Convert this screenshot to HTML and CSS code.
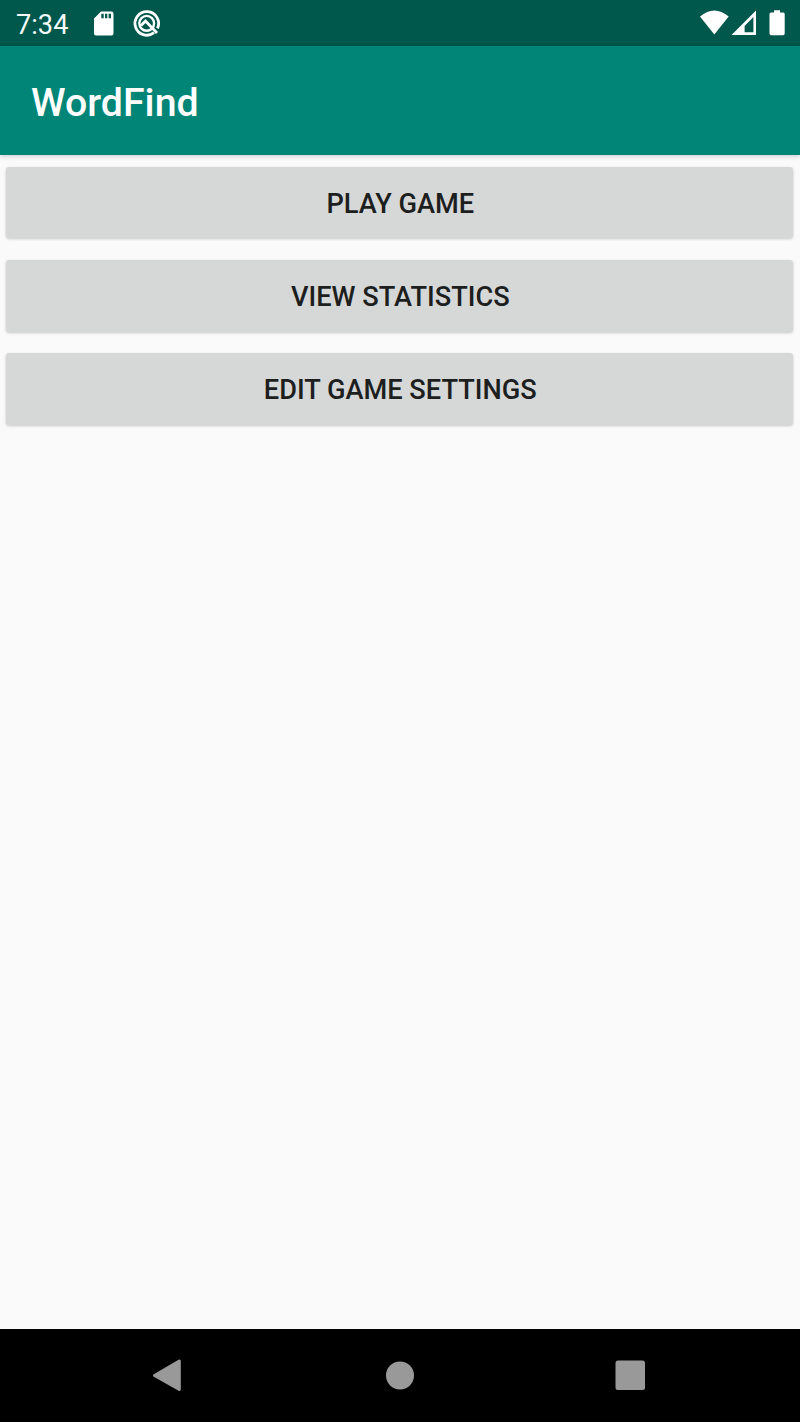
FILE: index.html
```html
<!DOCTYPE html>
<html lang="en">
<head>
<meta charset="utf-8">
<title>WordFind</title>
<link rel="stylesheet" href="styles.css">
</head>
<body>
<div class="screen">
  <div class="status-bar">
    <span class="clock">7:34</span>
    <svg class="status-icons-left" width="80" height="46" viewBox="0 0 80 46">
      <path fill="#fff" fill-rule="evenodd" d="M16 11.500H26.500Q28.500 11.500 28.500 13.500V33.500Q28.500 35.500 26.500 35.500H11Q9 35.500 9 33.500V18.500ZM16.300 13.700V18.300H18.700V13.700ZM20 13.700V18.300H22.300V13.700ZM23.600 13.700V18.300H26V13.700Z"/>
      <g fill="none" stroke="#fff">
        <path stroke-width="2.800" d="M69 32.700A11.800 11.800 0 1 1 72.500 28.300"/>
        <circle cx="61.700" cy="23.300" r="7.400" stroke-width="2.400"/>
        <path stroke-width="2.800" d="M56 25.500L60.500 21L72 33"/>
      </g>
    </svg>
    <svg class="status-icons-right" width="100" height="46" viewBox="0 0 100 46">
      <g fill="#fff">
        <path d="M0 16.500Q14.300 4.500 28.700 16.500L14.300 34.500Z"/>
        <path fill-rule="evenodd" d="M56 10.500V35H31.500ZM53.400 17L44.600 26V32.300H53.400Z"/>
        <path d="M74 10.300H80V12.500H83.200Q84.700 12.500 84.700 14V33.500Q84.700 35.300 83 35.300H71.200Q69.500 35.300 69.500 33.500V14Q69.500 12.500 71 12.500H74Z"/>
      </g>
    </svg>
  </div>
  <header class="app-bar"><h1 class="title">WordFind</h1></header>
  <main class="menu">
    <button class="menu-button">PLAY GAME</button>
    <button class="menu-button">VIEW STATISTICS</button>
    <button class="menu-button">EDIT GAME SETTINGS</button>
  </main>
  <nav class="nav-bar">
    <svg width="800" height="93" viewBox="0 0 800 93">
      <g fill="#999" stroke="#999" stroke-linejoin="round">
        <path stroke-width="3" d="M154.500 46.500L179.300 32V60.500Z"/>
        <circle cx="400" cy="46.500" r="14" stroke="none"/>
        <rect x="615.500" y="31.500" width="29.500" height="29.500" rx="2.500" stroke="none"/>
      </g>
    </svg>
  </nav>
</div>
</body>
</html>
```
FILE: styles.css
```css
body {
  margin: 0;
  font-family: Roboto, sans-serif;
}

.screen {
  display: flex;
  flex-direction: column;
  width: 800px;
  height: 1422px;
  background: #fafafa;
}

.status-bar {
  display: flex;
  flex: none;
  height: 46px;
  background: #00574b;
}

.clock {
  width: 69px;
  padding-left: 16px;
  color: #f3faf9;
  font-size: 27.2px;
  line-height: 50px;
}

.status-icons-right {
  margin-left: auto;
}

.app-bar {
  display: flex;
  flex: none;
  align-items: center;
  height: 109px;
  padding-left: 31px;
  background: #008577;
  box-shadow: 0 1px 5px rgba(0, 0, 0, 0.2);
}

.title {
  margin: 5px 0 0;
  color: #fff;
  font-size: 39.3px;
  font-weight: 500;
}

.menu {
  display: flex;
  flex: 1;
  flex-direction: column;
  gap: 21.500px;
  padding: 11.500px 6.600px 0 6.400px;
}

.menu-button {
  height: 71.800px;
  padding: 2.600px 0 0 0.800px;
  border: 0;
  border-radius: 3px;
  background: #d6d8d7;
  box-shadow: 0 1px 3px rgba(0, 0, 0, 0.2);
  color: #1d1e1e;
  font-family: inherit;
  font-size: 27.2px;
  font-weight: 500;
}

.nav-bar {
  display: flex;
  flex: none;
  height: 93px;
  background: #000;
}
```
